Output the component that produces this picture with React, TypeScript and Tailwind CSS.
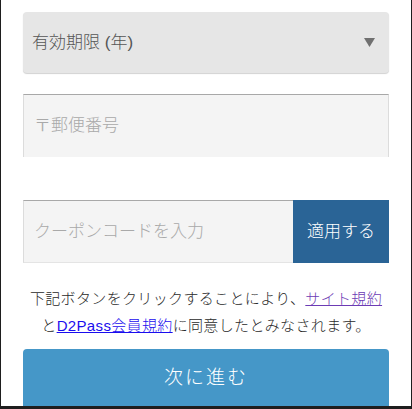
import React from "react";

export default function App() {
  const font = { fontFamily: '"Liberation Sans", "Noto Sans CJK JP", sans-serif' };
  return (
    <div
      className="w-[412px] h-[409px] overflow-hidden bg-[#1e1e1e] pl-px pr-px pb-[3px] font-light"
      style={font}
    >
      <div className="h-full bg-white px-[22px] pt-[12px] overflow-hidden">
        <div className="h-[61px] rounded-[4px] bg-[#e6e6e6] shadow-[0_1px_1px_rgba(0,0,0,0.18)] flex items-center justify-between pl-[9px] pr-[14px]">
          <span className="text-[17px] text-[#555]">有効期限 (年)</span>
          <svg width="11" height="9" viewBox="0 0 11 9">
            <polygon points="0,0 11,0 5.5,9" fill="#707070" />
          </svg>
        </div>

        <div className="mt-[21px] h-[63px] bg-[#f4f4f4] border-t border-t-[#a8a8a8] border-x border-x-[#dcdcdc] flex items-center pl-[10px]">
          <span className="text-[17px] text-[#a9a9a9]">〒郵便番号</span>
        </div>

        <div className="mt-[43px] h-[63px] flex">
          <div className="flex-1 bg-[#f4f4f4] border-t border-t-[#a8a8a8] border-l border-l-[#dcdcdc] border-b border-b-[#e4e4e4] flex items-center pl-[10px]">
            <span className="text-[17px] text-[#a9a9a9]">クーポンコードを入力</span>
          </div>
          <div className="w-[96px] bg-[#2a6496] flex items-center justify-center">
            <span className="text-[17px] text-white">適用する</span>
          </div>
        </div>

        <div className="mt-[22px] text-center text-[15px] leading-[27px] text-[#2a2a2a] tracking-[0.35px]">
          <div>
            下記ボタンをクリックすることにより、
            <span className="text-[#6c3bb4] underline">サイト規約</span>
          </div>
          <div>
            と<span className="text-[#1a0dee] underline">D2Pass会員規約</span>
            に同意したとみなされます。
          </div>
        </div>

        <div className="mt-[10px] h-[70px] rounded-t-[4px] bg-[#4597c8] flex justify-center pt-[15px]">
          <span className="text-[19px] tracking-[2px] text-white leading-[28px]">次に進む</span>
        </div>
      </div>
    </div>
  );
}
